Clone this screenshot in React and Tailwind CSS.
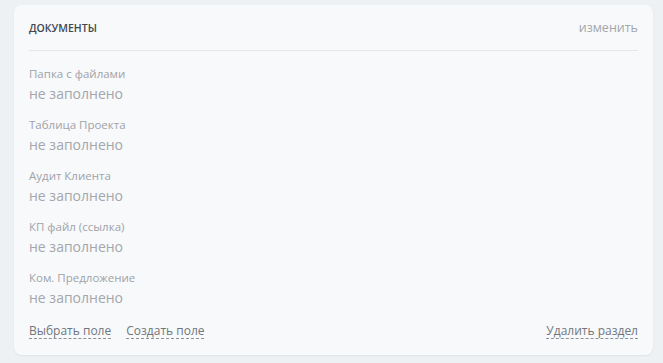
export default function App() {
  const fields = [
    "Папка с файлами",
    "Таблица Проекта",
    "Аудит Клиента",
    "КП файл (ссылка)",
    "Ком. Предложение",
  ]

  return (
    <div className="h-[363px] w-[663px] bg-[#eef1f4] pl-[14px] pr-[10px] pt-[5px] font-['Open_Sans',sans-serif]">
      <div className="h-[350px] rounded-[8px] bg-[#f8f9fb] px-[15px] pt-[14px] shadow-[0_1px_2px_rgba(0,0,0,0.06)]">

        {/* Header */}
        <div className="flex items-center justify-between border-b border-[#e3e6ea] pb-[13px]">
          <div className="text-[10.5px] font-semibold leading-[18px] text-[#41474d]">ДОКУМЕНТЫ</div>
          <div className="text-[12.5px] leading-[18px] text-[#a3a7ab]">изменить</div>
        </div>

        {/* Fields */}
        <div className="flex flex-col gap-[13px] pt-[15px]">
          {fields.map((f) => (
            <div key={f} className="flex flex-col gap-[2px]">
              <div className="text-[11.5px] leading-[16px] text-[#9ea3a8]">{f}</div>
              <div className="text-[14px] leading-[20px] text-[#a3a7ab]">не заполнено</div>
            </div>
          ))}
        </div>

        {/* Footer */}
        <div className="mt-[13px] flex items-center justify-between text-[12px] leading-[20px] text-[#70767c]">
          <div className="flex gap-[15px]">
            <span className="underline decoration-dashed decoration-[#8a9096] underline-offset-[3px]">Выбрать поле</span>
            <span className="underline decoration-dashed decoration-[#8a9096] underline-offset-[3px]">Создать поле</span>
          </div>
          <span className="underline decoration-dashed decoration-[#8a9096] underline-offset-[3px]">Удалить раздел</span>
        </div>
      </div>
    </div>
  )
}
